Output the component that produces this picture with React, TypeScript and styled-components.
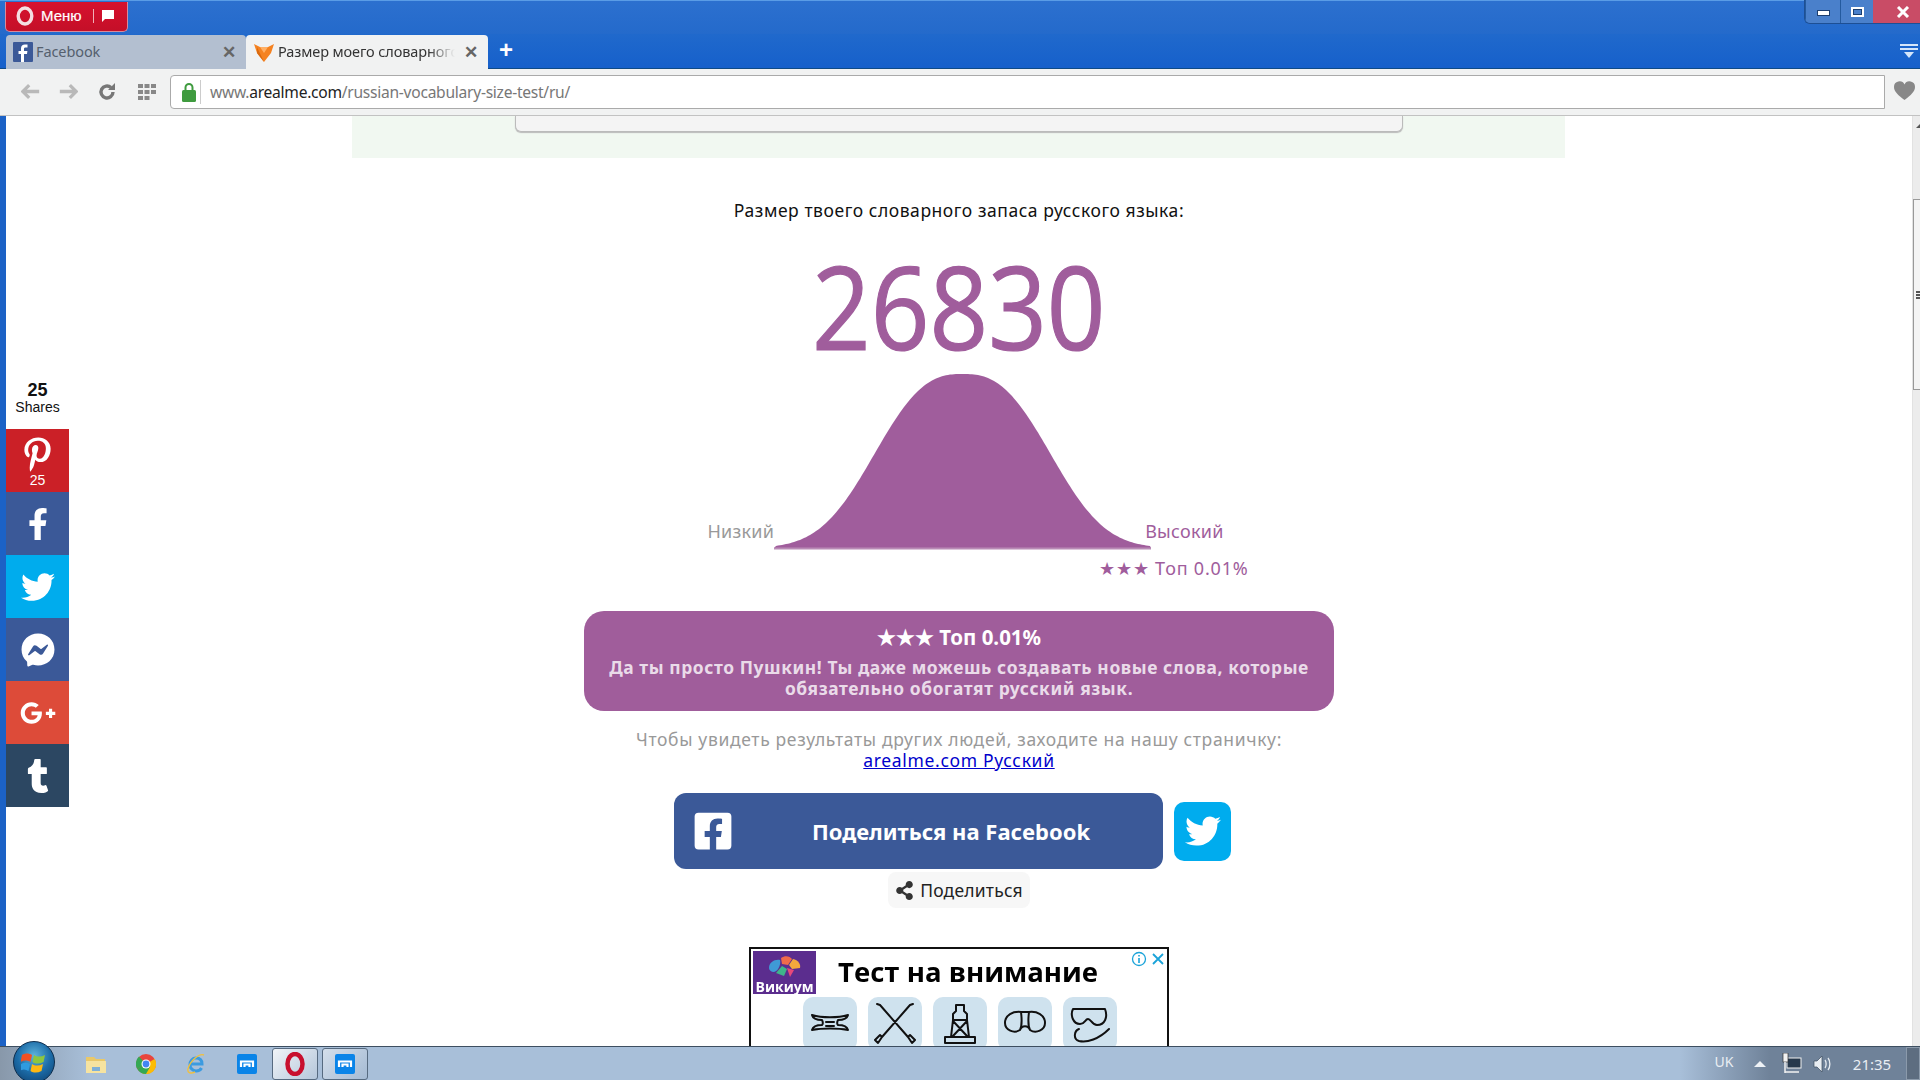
import React from 'react';
import styled, { createGlobalStyle } from 'styled-components';
import { FaPinterestP, FaFacebookF, FaTwitter, FaFacebookMessenger, FaGooglePlusG, FaTumblr, FaFacebookSquare, FaShareAlt } from 'react-icons/fa';

const Global = createGlobalStyle`
  html, body { margin: 0; padding: 0; overflow: hidden; background: #fff; }
  * { box-sizing: border-box; }
`;

const Screen = styled.div`
  width: 1920px; height: 1080px; display: flex; flex-direction: column; overflow: hidden;
  font-family: "Noto Sans", "Open Sans", sans-serif; color: #000;
`;
const TitleBar = styled.div`
  height: 34px; display: flex; justify-content: space-between; align-items: flex-start;
  padding-left: 5px; border-top: 1px solid #5a9ce6;
  background: linear-gradient(#2c70cf, #246acb);
`;
const MenuButton = styled.div`
  width: 123px; height: 30px; margin-top: 1px; display: flex; align-items: center; gap: 7px; padding: 0 0 2px 10px;
  background: linear-gradient(#d7112e, #c40f28); border: 1px solid #d98a9a; border-top: none; border-radius: 0 0 5px 5px;
  color: #fff; font: 15px "Liberation Sans", sans-serif; -webkit-text-stroke: .2px #fff;
`;
const MenuDivider = styled.span`width: 1px; height: 14px; background: #f0b0b8; margin-left: 4px;`;
const WindowControls = styled.div`
  display: flex; height: 24px; margin-top: -1px; border: 1px solid #1d4f94; border-top: none; border-right: none; border-radius: 0 0 0 6px; overflow: hidden;
`;
const WinButton = styled.div<{ $w: number; $close?: boolean }>`
  width: ${p => p.$w}px; display: flex; align-items: center; justify-content: center;
  padding-left: ${p => p.$close ? 12 : 0}px;
  background: ${p => p.$close ? '#c94c66' : '#4a80cb'}; border-left: ${p => p.$close ? 'none' : '1px solid #245a9e'};
`;
const MinGlyph = styled.span`width: 13px; height: 6px; margin-top: 3px; background: #fff; border: 1px solid #1d3f70;`;
const MaxGlyph = styled.span`width: 13px; height: 10px; background: transparent; border: 2px solid #fff; outline: 1px solid #1d3f70; outline-offset: -3px;`;
const TabRow = styled.div`
  height: 35px; display: flex; align-items: flex-end; padding-left: 6px; border-bottom: 1px solid #0f4a86;
  background: linear-gradient(#2069cc, #1660cb);
`;
const Tab = styled.div<{ $active?: boolean }>`
  width: ${p => p.$active ? 242 : 240}px; height: 34px; display: flex; align-items: center; padding: 0 10px 0 7px; gap: 3px;
  background: ${p => p.$active ? '#f1f2f2' : '#b3bfd0'}; border-radius: 4px 4px 0 0;
  font: 14.5px "Noto Sans", sans-serif; color: ${p => p.$active ? '#333' : '#55606e'};
  margin-bottom: -1px;
`;
const TabLabel = styled.span<{ $fade?: boolean }>`
  flex: 1; min-width: 0; white-space: nowrap; overflow: hidden; letter-spacing: -.1px; padding-bottom: 2px;
  ${p => p.$fade ? 'mask-image: linear-gradient(to right, #000 85%, transparent 100%);' : ''}
`;
const TabClose = styled.span`font: bold 17px "Liberation Sans", sans-serif; color: #666; margin-left: 6px;`;
const NewTab = styled.span`margin: 0 0 3px 11px; color: #fff; font: bold 24px "Liberation Sans", sans-serif; line-height: 30px;`;
const TabMenu = styled.div`margin-left: auto; margin-right: 2px; align-self: center; padding-top: 4px;`;
const Toolbar = styled.div`
  height: 47px; display: flex; align-items: flex-start; background: #f1f2f2; border-bottom: 1px solid #c2c2c2; padding: 6px 0 0 6px;
`;
const NavGroup = styled.div`display: flex; width: 164px; height: 33px; align-items: center; padding-left: 5px; flex-shrink: 0;`;
const NavSlot = styled.span<{ $w: number }>`width: ${p => p.$w}px; display: flex; justify-content: center; align-items: center;`;
const UrlBar = styled.div`
  width: 1715px; height: 34px; display: flex; align-items: center; background: #fff; border: 1px solid #aaa; border-radius: 4px 0 0 4px; flex-shrink: 0;
  font: 15.6px "Noto Sans", sans-serif; color: #777; letter-spacing: -.27px; padding-bottom: 1px;
`;
const Lock = styled.span`width: 22px; display: flex; justify-content: center; margin-left: 7px;`;
const UrlSep = styled.span`width: 1px; height: 24px; background: #ccc; margin-right: 9px;`;
const Domain = styled.span`color: #222;`;
const HeartSlot = styled.div`flex: 1; display: flex; justify-content: center; padding: 6px 0 0 4px;`;

const Body = styled.div`flex: 1; min-height: 0; display: flex; position: relative;`;
const LeftEdge = styled.div`width: 6px; background: #1c62c6;`;
const Scrollbar = styled.div`width: 8px; background: #ececec; position: relative; padding-top: 8px; border-left: 1px solid #e2e2e2; display: flex; flex-direction: column; align-items: flex-end;`;
const ScrollArrow = styled.div`width: 0; height: 0; border-left: 4px solid transparent; border-bottom: 4px solid #555; margin-bottom: 71px;`;
const Thumb = styled.div`width: 100%; height: 191px; background: #f4f4f4; border: 1px solid #999; border-right: none; display: flex; flex-direction: column; justify-content: center; gap: 1px; align-items: flex-end;`;
const Grip = styled.span`width: 4px; height: 2px; background: #555;`;
const Page = styled.div`flex: 1; min-width: 0; overflow: hidden; display: flex; flex-direction: column; align-items: center; background: #fff;`;

const GreenBand = styled.div`width: 1213px; height: 42px; background: #f1f8f1; flex-shrink: 0; display: flex; justify-content: center; margin-left: -1px;`;
const GreenCard = styled.div`width: 888px; height: 16px; background: #f4f4f4; border: 1px solid #bbb; border-top: none; border-radius: 0 0 6px 6px; box-shadow: 0 1px 1px #bbb;`;
const Heading = styled.div`margin-top: 40px; height: 24px; line-height: 24px; font-size: 17.5px; letter-spacing: .55px; color: #111; flex-shrink: 0;`;
const Score = styled.div`
  margin-top: 22px; height: 130px; font: 400 116px/122px "Open Sans", sans-serif; color: #a05d9c; transform: scaleX(.885); -webkit-text-stroke: 1.2px #a05d9c; flex-shrink: 0;
`;
const CurveRow = styled.div`display: flex; align-items: flex-end; padding-left: 13px; height: 176px; flex-shrink: 0;`;
const CurveLabel = styled.span<{ $high?: boolean }>`
  font-size: 18px; line-height: 24px; margin-bottom: 7px; color: ${p => p.$high ? '#a05d9c' : '#999'};
  margin-left: ${p => p.$high ? -6 : 0}px; position: relative;
  letter-spacing: .25px;
`;
const Rank = styled.div`width: 579px; text-align: right; font-size: 18px; line-height: 24px; height: 24px; margin-top: 6px; color: #a05d9c; letter-spacing: .8px; flex-shrink: 0;`;
const ResultCard = styled.div`
  width: 750px; height: 100px; margin-top: 31px; background: #a05d9b; border-radius: 20px; color: #fff; text-align: center; padding: 12px 20px 0; font-weight: 700; flex-shrink: 0;
`;
const ResultTitle = styled.div`font-size: 20.5px; line-height: 28px; margin-bottom: 6px;`;
const ResultText = styled.div`font-size: 17.4px; line-height: 21px; color: rgba(255,255,255,.8); letter-spacing: .6px;`;
const Hint = styled.div`margin-top: 18px; text-align: center; font-size: 17.5px; line-height: 21px; color: #999; letter-spacing: .66px; flex-shrink: 0;`;
const HintLink = styled.a`display: block; color: #0000cc; text-decoration: underline;`;
const ShareRow = styled.div`display: flex; align-items: center; gap: 11px; margin-top: 22px; margin-left: -13px; flex-shrink: 0;`;
const FacebookButton = styled.div`
  width: 489px; height: 76px; background: #3b5998; border-radius: 12px; display: flex; align-items: center; padding-left: 18px; color: #fff; flex-shrink: 0;
`;
const FacebookLabel = styled.span`margin-left: 78px; font-size: 22px; font-weight: 700; white-space: nowrap;`;
const TwitterButton = styled.div`width: 57px; height: 59px; background: #00acee; border-radius: 10px; display: flex; align-items: center; justify-content: center; color: #fff;`;
const SmallShare = styled.div`
  width: 142px; height: 36px; margin-top: 3px; background: #f7f7f7; border-radius: 8px; display: flex; align-items: center; justify-content: center; gap: 6px; font-size: 17.5px; color: #222; flex-shrink: 0; letter-spacing: .2px;
`;
const Ad = styled.div`
  width: 420px; height: 110px; margin-top: 39px; border: 2px solid #111; border-bottom: none; background: #fff; position: relative; flex-shrink: 0; padding: 0 2px;
`;
const AdTop = styled.div`display: flex; height: 45px; align-items: center;`;
const AdLogo = styled.div`width: 63px; height: 43px; background: #5b2d8e; color: #fff; display: flex; flex-direction: column; align-items: center; justify-content: flex-end; font: 700 14px "Open Sans", sans-serif; line-height: 15px; margin-top: 1px; flex-shrink: 0; filter: blur(.3px);`;
const AdTitle = styled.div`margin-left: 22px; font: 700 27.5px "Open Sans", sans-serif; white-space: nowrap; filter: blur(.3px);`;
const AdBadge = styled.div`position: absolute; right: 0; top: 0; width: 38px; height: 20px; background: #fff; display: flex; align-items: center; justify-content: space-between; padding: 0 2px; color: #1aa3d9;`;
const AdIcons = styled.div`display: flex; gap: 11px; margin: 3px 0 0 50px;`;
const AdTile = styled.div`width: 54px; height: 54px; border-radius: 10px; background: #cfe2ee; display: flex; align-items: center; justify-content: center; flex-shrink: 0; filter: blur(.3px);`;

const SideBar = styled.div`position: absolute; left: 6px; top: 250px; width: 63px; display: flex; flex-direction: column; font-family: "Liberation Sans", sans-serif;`;
const ShareCount = styled.div`height: 63px; display: flex; flex-direction: column; align-items: center; justify-content: center; background: #fff; color: #111; padding-top: 1px;`;
const CountNum = styled.b`font-size: 18px; line-height: 18px;`;
const CountLabel = styled.span`font-size: 14px; line-height: 16px;`;
const SideButton = styled.div<{ $bg: string }>`
  height: 63px; background: ${p => p.$bg}; color: #fff; display: flex; flex-direction: column; align-items: center; justify-content: center; font-size: 14px; line-height: 15px;
`;
const PinCount = styled.span`margin-top: 1px; margin-bottom: -4px;`;

const Taskbar = styled.div`
  height: 34px; flex-shrink: 0; display: flex; align-items: center; position: relative; border-top: 1px solid #3d4e60;
  background: linear-gradient(to right, #8898aa 0, #a8bfd9 90px, #a8bfd9 1680px, #6f8299 1770px, #6f8299 100%);
`;
const Orb = styled.div`
  width: 42px; height: 42px; border-radius: 50%; margin: -4px 0 0 13px; flex-shrink: 0; position: relative; z-index: 2;
  background: radial-gradient(circle at 50% 35%, #5fb4dc 0, #1c6ca8 50%, #0d3c6a 100%); border: 1px solid #0c2c4c;
  display: flex; align-items: center; justify-content: center;
`;
const TaskIcons = styled.div`display: flex; align-items: center; margin-left: 16px; height: 33px;`;
const TaskIcon = styled.div<{ $w: number }>`width: ${p => p.$w}px; height: 33px; display: flex; align-items: center; justify-content: center; flex-shrink: 0;`;
const TaskTile = styled.div<{ $active?: boolean }>`
  width: 46px; height: 32px; margin-top: 1px; margin-right: 4px; display: flex; align-items: center; justify-content: center; flex-shrink: 0;
  border: 1px solid #566a80; border-radius: 3px;
  background: ${p => p.$active ? 'linear-gradient(135deg, #f0f4f8, #b4c6da)' : 'linear-gradient(135deg, #d4dfeb, #a4bad3)'};
`;
const Tray = styled.div`margin-left: auto; display: flex; align-items: center; height: 33px; color: #e9eef3; font: 15px "Noto Sans", sans-serif;`;
const TrayItem = styled.span<{ $w: number }>`width: ${p => p.$w}px; display: flex; justify-content: center; align-items: center;`;
const Uk = styled(TrayItem)`font-size: 14px; margin-top: -4px;`;
const ShowDesktop = styled.div`width: 14px; height: 33px; background: #5d6d80; border: 1px solid #8b9aab;`;

const bellPath = (() => {
  const w = 377, h = 174, a = 106, p = 2.62, c = w / 2;
  let d = `M0 ${h}`;
  for (let x = 2; x <= w; x += 2) {
    const g = Math.exp(-Math.pow(Math.abs(x - c) / a, p));
    d += `L${x} ${(h - g * h).toFixed(1)}`;
  }
  return d + `L${w} ${h}Z`;
})();

const Arrow = ({ flip, color }: { flip?: boolean; color: string }) => (
  <svg width="20" height="17" viewBox="0 0 22 18" style={flip ? { transform: 'scaleX(-1)' } : undefined}>
    <path d="M9 2L2 9l7 7M3 9h17" fill="none" stroke={color} strokeWidth="3.6" />
  </svg>
);
const AdGlyph = ({ d }: { d: string }) => (
  <svg width="46" height="46" viewBox="0 0 46 46"><path d={d} fill="none" stroke="#111" strokeWidth="2" strokeLinejoin="round" strokeLinecap="round" /></svg>
);
const Maxthon = () => (
  <svg width="20" height="20" viewBox="0 0 20 20"><rect width="20" height="20" rx="2" fill="#0a84e8" /><path d="M4 13V7.5h12V13M7.5 13v-2.5h5V13" fill="none" stroke="#fff" strokeWidth="2.2" /></svg>
);

export default function App() {
  return (
    <Screen>
      <Global />
      <TitleBar>
        <MenuButton>
          <svg width="18" height="20" viewBox="0 0 18 20"><ellipse cx="9" cy="10" rx="6.8" ry="8" fill="none" stroke="#f4dfe2" strokeWidth="3.4" /></svg>
          <span>Меню</span>
          <MenuDivider />
          <svg width="13" height="12" viewBox="0 0 13 12"><path d="M1 0h12v9H4l-3 3z" fill="#fff" /></svg>
        </MenuButton>
        <WindowControls>
          <WinButton $w={35}><MinGlyph /></WinButton>
          <WinButton $w={33}><MaxGlyph /></WinButton>
          <WinButton $w={47} $close>
            <svg width="14" height="12" viewBox="0 0 14 12"><path d="M2 1l10 10M12 1L2 11" stroke="#fff" strokeWidth="3" /></svg>
          </WinButton>
        </WindowControls>
      </TitleBar>
      <TabRow>
        <Tab>
          <svg width="20" height="20" viewBox="0 0 20 20"><rect width="20" height="20" rx="1" fill="#3b5998" /><path d="M11 20v-8h3l.4-3H11V7c0-1 .4-1.5 1.600-1.500H14.500V2.500h-2.500C9.500 2.500 8 4 8 6.500V9H5.500v3H8v8z" fill="#fff" /></svg>
          <TabLabel>Facebook</TabLabel>
          <TabClose>✕</TabClose>
        </Tab>
        <Tab $active>
          <svg width="22" height="22" viewBox="0 0 22 22"><path d="M1 3l6 3h8l6-3-3 9-7 9-7-9z" fill="#f58220" /><path d="M4 6l7 15-7-9z" fill="#d96a10" /><path d="M7 6h8l-4 6z" fill="#ffb066" /></svg>
          <TabLabel $fade>Размер моего словарного</TabLabel>
          <TabClose>✕</TabClose>
        </Tab>
        <NewTab>+</NewTab>
        <TabMenu>
          <svg width="18" height="15" viewBox="0 0 18 15"><path d="M0 1h18M0 5h18" stroke="#d5e6fa" strokeWidth="2" /><path d="M4 8h10l-5 6z" fill="#d5e6fa" /></svg>
        </TabMenu>
      </TabRow>
      <Toolbar>
        <NavGroup>
          <NavSlot $w={40}><Arrow color="#b9b9b9" /></NavSlot>
          <NavSlot $w={34}><Arrow color="#b9b9b9" flip /></NavSlot>
          <NavSlot $w={44}>
            <svg width="20" height="20" viewBox="0 0 20 20"><path d="M16 10a6 6 0 1 1-2-4.500" fill="none" stroke="#777" strokeWidth="3.400" /><path d="M11 8h7V1z" fill="#777" /></svg>
          </NavSlot>
          <NavSlot $w={36}>
            <svg width="18" height="16" viewBox="0 0 18 16" fill="#888"><path d="M0 0h5v4H0zM6.500 0h5v4h-5zM13 0h5v4h-5zM0 6h5v4H0zM6.500 6h5v4h-5zM13 6h5v4h-5zM0 12h5v4H0zM6.500 12h5v4h-5z" /></svg>
          </NavSlot>
        </NavGroup>
        <UrlBar>
          <Lock>
            <svg width="14" height="20" viewBox="0 0 14 20"><path d="M3.500 9V5.500a3.500 3.500 0 0 1 7 0V9" fill="none" stroke="#3f9b3f" strokeWidth="2" /><rect y="8" width="14" height="12" rx="1.500" fill="#3f9b3f" /></svg>
          </Lock>
          <UrlSep />
          <span>www.<Domain>arealme.com</Domain>/russian-vocabulary-size-test/ru/</span>
        </UrlBar>
        <HeartSlot>
          <svg width="21" height="19" viewBox="0 0 21 19"><path d="M10.500 19C4 14 0 10.500 0 6a5.500 5.500 0 0 1 10.500-2.400A5.500 5.500 0 0 1 21 6c0 4.500-4 8-10.500 13z" fill="#888" /></svg>
        </HeartSlot>
      </Toolbar>
      <Body>
        <LeftEdge />
        <Page>
          <GreenBand><GreenCard /></GreenBand>
          <Heading>Размер твоего словарного запаса русского языка:</Heading>
          <Score>26830</Score>
          <CurveRow>
            <CurveLabel>Низкий</CurveLabel>
            <svg width="377" height="176" viewBox="0 0 377 176">
              <path d={bellPath} fill="#a05d9c" />
              <path d="M0 174.500H377" stroke="#b98cb6" strokeWidth="2" />
            </svg>
            <CurveLabel $high>Высокий</CurveLabel>
          </CurveRow>
          <Rank>★★★ Топ 0.01%</Rank>
          <ResultCard>
            <ResultTitle>★★★ Топ 0.01%</ResultTitle>
            <ResultText>Да ты просто Пушкин! Ты даже можешь создавать новые слова, которые обязательно обогатят русский язык.</ResultText>
          </ResultCard>
          <Hint>
            Чтобы увидеть результаты других людей, заходите на нашу страничку:
            <HintLink>arealme.com Русский</HintLink>
          </Hint>
          <ShareRow>
            <FacebookButton>
              <FaFacebookSquare size={42} />
              <FacebookLabel>Поделиться на Facebook</FacebookLabel>
            </FacebookButton>
            <TwitterButton><FaTwitter size={36} /></TwitterButton>
          </ShareRow>
          <SmallShare><FaShareAlt size={19} color="#333" />Поделиться</SmallShare>
          <Ad>
            <AdBadge>
              <svg width="16" height="16" viewBox="0 0 16 16"><circle cx="8" cy="8" r="6.500" fill="none" stroke="#1aa3d9" strokeWidth="1.300" /><path d="M8 7v5M8 4v1.500" stroke="#1aa3d9" strokeWidth="1.600" /></svg>
              <svg width="14" height="14" viewBox="0 0 14 14"><path d="M2 2l10 10M12 2L2 12" stroke="#1aa3d9" strokeWidth="1.800" /></svg>
            </AdBadge>
            <AdTop>
              <AdLogo>
                <svg width="36" height="24" viewBox="0 0 36 24"><path d="M2 13C2 7 8 4 13 5c1 3-1 11-6 12-3 0-5-2-5-4z" fill="#3f9ad6" /><path d="M14 3c4-3 9-2 11 1l-4 6-6-1z" fill="#ef6b4a" /><path d="M26 4c5 1 8 5 7 9l-8 1-3-4z" fill="#f4a93c" /><path d="M9 18l6-7 5 3-3 7z" fill="#3fb58a" /><path d="M20 13l7 2-4 7z" fill="#e8487a" /></svg>
                <span>Викиум</span>
              </AdLogo>
              <AdTitle>Тест на внимание</AdTitle>
            </AdTop>
            <AdIcons>
              <AdTile><AdGlyph d="M5 14c10 3 26 3 36 0-1 4-6 5-10 5-1 2-1 4 0 5 4 0 9 1 10 5-10-2-26-2-36 0 1-4 6-5 10-5 1-1 1-3 0-5-4 0-9-1-10-5zM19 21h8M19 25h8" /></AdTile>
              <AdTile><AdGlyph d="M8 4l28 32M38 4L10 36M36 36l4 6 3-3-5-5zM10 36l-4 6-3-3 5-5zM8 4l-3-1M38 4l3-1" /></AdTile>
              <AdTile><AdGlyph d="M19 4h8v6l3 3v6H16v-6l3-3zM16 19h14l2 17H14zM16 20l14 15M30 20L16 35M8 36h30v6H8z" /></AdTile>
              <AdTile><AdGlyph d="M3 22c0-8 8-12 16-11 1 8 1 14-1 18-6 4-15 0-15-7zM43 22c0-8-8-12-16-11-1 8-1 14 1 18 6 4 15 0 15-7zM19 11h8M18 29c2-5 8-5 10 0" /></AdTile>
              <AdTile><AdGlyph d="M6 8h32c3 8 0 16-8 16-5 0-6-6-9-6s-3 5-8 5C6 23 3 14 6 8zM12 28c-5 2-6 10 0 12 8 2 20-2 30-12" /></AdTile>
            </AdIcons>
          </Ad>
        </Page>
        <Scrollbar>
          <ScrollArrow />
          <Thumb><Grip /><Grip /><Grip /></Thumb>
        </Scrollbar>
        <SideBar>
          <ShareCount><CountNum>25</CountNum><CountLabel>Shares</CountLabel></ShareCount>
          <SideButton $bg="#cb2027"><FaPinterestP size={35} /><PinCount>25</PinCount></SideButton>
          <SideButton $bg="#3b5998"><FaFacebookF size={32} /></SideButton>
          <SideButton $bg="#00aced"><FaTwitter size={34} /></SideButton>
          <SideButton $bg="#3b5998"><FaFacebookMessenger size={34} /></SideButton>
          <SideButton $bg="#dd4b39"><FaGooglePlusG size={36} /></SideButton>
          <SideButton $bg="#2c4762"><FaTumblr size={34} /></SideButton>
        </SideBar>
      </Body>
      <Taskbar>
        <Orb>
          <svg width="26" height="24" viewBox="0 0 26 24">
            <path d="M1 5c3-2 7-2 10 0l-1.500 7c-3-2-7-2-10 0z" fill="#f25022" />
            <path d="M13 5c3 2 7 2 11 0l-1.500 7c-4 2-8 2-11 0z" fill="#8dc63f" />
            <path d="M0 14c3-2 6-2 9 0l-1.500 7c-3-2-6-2-9 0z" fill="#2f9be0" />
            <path d="M11 14c3 2 7 2 11 0l-1.500 7c-4 2-8 2-11 0z" fill="#fdb813" />
          </svg>
        </Orb>
        <TaskIcons>
          <TaskIcon $w={50}>
            <svg width="22" height="20" viewBox="0 0 22 20"><path d="M1 3h8l2 2h9v13H1z" fill="#e9c86a" /><path d="M1 7h20v12H1z" fill="#f6e3a0" /><path d="M7 13h8v4H7z" fill="#7fb0d8" /></svg>
          </TaskIcon>
          <TaskIcon $w={50}>
            <svg width="20" height="20" viewBox="0 0 20 20"><circle cx="10" cy="10" r="10" fill="#e8453c" /><path d="M10 10l8.700-5A10 10 0 0 1 5 18.700z" fill="#fbbc05" /><path d="M10 10L1.300 15A10 10 0 0 0 10 20l4-7z" fill="#34a853" /><path d="M10 10L1.300 15A10 10 0 0 1 3 2.500z" fill="#34a853" /><circle cx="10" cy="10" r="4.500" fill="#fff" /><circle cx="10" cy="10" r="3.400" fill="#4285f4" /></svg>
          </TaskIcon>
          <TaskIcon $w={50}>
            <svg width="22" height="22" viewBox="0 0 22 22"><path d="M5 11h12c0-4-2.500-6-6-6S5 8 5 11.500 7.500 18 11 18c2.500 0 4.500-1 5.500-3" fill="none" stroke="#3c9be0" strokeWidth="3" /><path d="M19 2c-5-2-14 6-16 14-1 4 3 5 7 3" fill="none" stroke="#f0c040" strokeWidth="1.400" /></svg>
          </TaskIcon>
          <TaskIcon $w={51}><Maxthon /></TaskIcon>
          <TaskTile $active>
            <svg width="20" height="24" viewBox="0 0 20 24"><ellipse cx="10" cy="12" rx="7.500" ry="10" fill="none" stroke="#c8102e" strokeWidth="4.500" /></svg>
          </TaskTile>
          <TaskTile><Maxthon /></TaskTile>
        </TaskIcons>
        <Tray>
          <Uk $w={40}>UK</Uk>
          <TrayItem $w={32}><svg width="12" height="6" viewBox="0 0 12 6"><path d="M6 0l6 6H0z" fill="#eef2f6" /></svg></TrayItem>
          <TrayItem $w={32}>
            <svg width="20" height="21" viewBox="0 0 20 21"><rect x="5" y="5" width="14" height="10" fill="#26384c" stroke="#f2f2f2" /><rect x="1" y="0" width="5" height="9" fill="#f2f2f2" stroke="#333" strokeWidth=".7" /><path d="M3 9v11M3 19h14" stroke="#f2f2f2" strokeWidth="1.500" /></svg>
          </TrayItem>
          <TrayItem $w={30}>
            <svg width="22" height="20" viewBox="0 0 22 20"><path d="M2 7h3l5-5v16l-5-5H2z" fill="#e8edf2" stroke="#3d4e60" strokeWidth=".7" /><path d="M13 6c1.500 2 1.500 6 0 8M16 4c2.500 3 2.500 9 0 12" fill="none" stroke="#e8edf2" strokeWidth="1.300" /></svg>
          </TrayItem>
          <TrayItem $w={68}>21:35</TrayItem>
          <ShowDesktop />
        </Tray>
      </Taskbar>
    </Screen>
  );
}
